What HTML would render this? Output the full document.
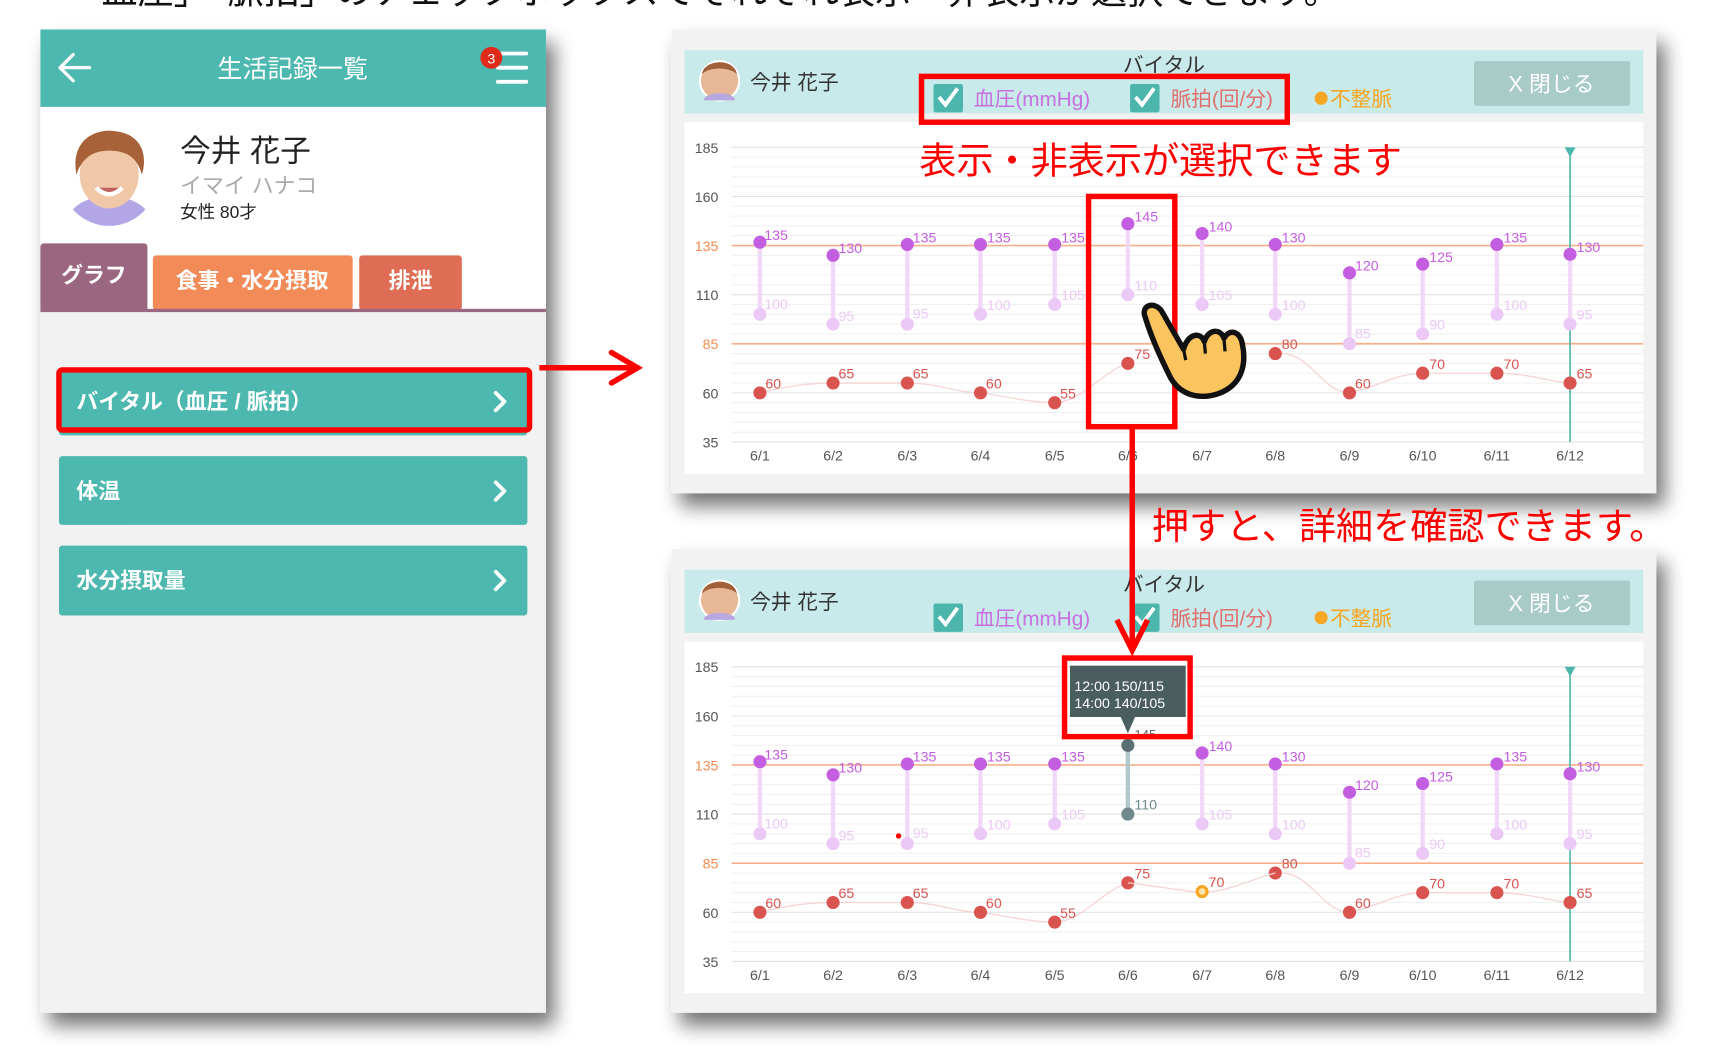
<!DOCTYPE html>
<html><head><meta charset="utf-8"><style>
html,body{margin:0;padding:0;background:#fff;width:1712px;height:1064px;overflow:hidden}
svg{display:block}
text{font-family:"Liberation Sans","Noto Sans CJK JP",sans-serif}
</style></head><body>
<svg width="1712" height="1064" viewBox="0 0 1568 975" preserveAspectRatio="none" xmlns="http://www.w3.org/2000/svg">
<defs>
<filter id="sh" x="-10%" y="-10%" width="125%" height="125%">
<feGaussianBlur in="SourceAlpha" stdDeviation="9"/>
<feOffset dx="8" dy="12"/>
<feComponentTransfer><feFuncA type="linear" slope="0.55"/></feComponentTransfer>
<feMerge><feMergeNode/><feMergeNode in="SourceGraphic"/></feMerge>
</filter>
<g id="hdr">
<rect x="627" y="46" width="878" height="58" fill="#c9eaea"/>
<circle cx="659" cy="74" r="19" fill="#fff"/>
<circle cx="659" cy="74" r="17" fill="#e8b896"/>
<path d="M643,68 C644,55 672,52 675,68 C670,62 650,60 643,68Z" fill="#a0603a"/>
<path d="M645,90 C650,84 668,84 673,90 L673,92 L645,92Z" fill="#b8a8e0"/>
<text x="687" y="82" font-size="19" fill="#333">今井 花子</text>
<text x="1066" y="66" font-size="19" fill="#333" text-anchor="middle">バイタル</text>
<rect x="855" y="77" width="27" height="26" rx="2" fill="#4db6ac"/>
<path d="M860,89 L866,96 L877,81" stroke="#fff" stroke-width="3.5" fill="none"/>
<text x="892" y="97" font-size="19" fill="#c76ee0">血圧(mmHg)</text>
<rect x="1035" y="77" width="27" height="26" rx="2" fill="#4db6ac"/>
<path d="M1040,89 L1046,96 L1057,81" stroke="#fff" stroke-width="3.5" fill="none"/>
<text x="1072" y="97" font-size="19" fill="#e07070">脈拍(回/分)</text>
<circle cx="1210" cy="90" r="6" fill="#f5a623"/>
<text x="1218" y="97" font-size="19" fill="#f5a623">不整脈</text>
<rect x="1350" y="56" width="143" height="41" rx="2" fill="#a8cbc8"/>
<text x="1421" y="84" font-size="20" fill="#fff" text-anchor="middle">X 閉じる</text>
<rect x="627" y="112" width="878" height="322" fill="#fff"/>
<g stroke="#f0f0f0" stroke-width="1">
<line x1="670" y1="144" x2="1505" y2="144"/><line x1="670" y1="153" x2="1505" y2="153"/><line x1="670" y1="162" x2="1505" y2="162"/><line x1="670" y1="171" x2="1505" y2="171"/>
<line x1="670" y1="189" x2="1505" y2="189"/><line x1="670" y1="198" x2="1505" y2="198"/><line x1="670" y1="207" x2="1505" y2="207"/><line x1="670" y1="216" x2="1505" y2="216"/>
<line x1="670" y1="234" x2="1505" y2="234"/><line x1="670" y1="243" x2="1505" y2="243"/><line x1="670" y1="252" x2="1505" y2="252"/><line x1="670" y1="261" x2="1505" y2="261"/>
<line x1="670" y1="279" x2="1505" y2="279"/><line x1="670" y1="288" x2="1505" y2="288"/><line x1="670" y1="297" x2="1505" y2="297"/><line x1="670" y1="306" x2="1505" y2="306"/>
<line x1="670" y1="324" x2="1505" y2="324"/><line x1="670" y1="333" x2="1505" y2="333"/><line x1="670" y1="342" x2="1505" y2="342"/><line x1="670" y1="351" x2="1505" y2="351"/>
<line x1="670" y1="369" x2="1505" y2="369"/><line x1="670" y1="378" x2="1505" y2="378"/><line x1="670" y1="387" x2="1505" y2="387"/><line x1="670" y1="396" x2="1505" y2="396"/>
</g>
<g stroke="#e2e2e2" stroke-width="1">
<line x1="670" y1="135" x2="1505" y2="135"/><line x1="670" y1="180" x2="1505" y2="180"/><line x1="670" y1="270" x2="1505" y2="270"/><line x1="670" y1="360" x2="1505" y2="360"/><line x1="670" y1="405" x2="1505" y2="405"/>
</g>
<line x1="670" y1="225" x2="1505" y2="225" stroke="#f7b08a" stroke-width="1.5"/>
<line x1="670" y1="315" x2="1505" y2="315" stroke="#f7b08a" stroke-width="1.5"/>
<g font-size="13" fill="#555" text-anchor="end">
<text x="658" y="140">185</text><text x="658" y="185">160</text><text x="658" y="230" fill="#f58a50">135</text><text x="658" y="275">110</text><text x="658" y="320" fill="#f58a50">85</text><text x="658" y="365">60</text><text x="658" y="410">35</text>
</g>
<g font-size="13" fill="#555" text-anchor="middle">
<text x="696" y="422">6/1</text><text x="763" y="422">6/2</text><text x="831" y="422">6/3</text><text x="898" y="422">6/4</text><text x="966" y="422">6/5</text><text x="1033" y="422">6/6</text><text x="1101" y="422">6/7</text><text x="1168" y="422">6/8</text><text x="1236" y="422">6/9</text><text x="1303" y="422">6/10</text><text x="1371" y="422">6/11</text><text x="1438" y="422">6/12</text>
</g>
<line x1="1438" y1="140" x2="1438" y2="405" stroke="#4db6ac" stroke-width="1.5"/>
<path d="M1433,135 L1443,135 L1438,144Z" fill="#4db6ac"/>
</g>
<g id="bp">
<g stroke="#f2d8f8" stroke-width="4">
<line x1="696" y1="225" x2="696" y2="288"/><line x1="763" y1="234" x2="763" y2="297"/><line x1="831" y1="225" x2="831" y2="297"/><line x1="898" y1="225" x2="898" y2="288"/><line x1="966" y1="225" x2="966" y2="279"/>
<line x1="1101" y1="216" x2="1101" y2="279"/><line x1="1168" y1="225" x2="1168" y2="288"/><line x1="1236" y1="252" x2="1236" y2="315"/><line x1="1303" y1="243" x2="1303" y2="306"/><line x1="1371" y1="225" x2="1371" y2="288"/><line x1="1438" y1="234" x2="1438" y2="297"/>
</g>
<g fill="#ecc8f6">
<circle cx="696" cy="288" r="6"/><circle cx="763" cy="297" r="6"/><circle cx="831" cy="297" r="6"/><circle cx="898" cy="288" r="6"/><circle cx="966" cy="279" r="6"/><circle cx="1101" cy="279" r="6"/><circle cx="1168" cy="288" r="6"/><circle cx="1236" cy="315" r="6"/><circle cx="1303" cy="306" r="6"/><circle cx="1371" cy="288" r="6"/><circle cx="1438" cy="297" r="6"/>
</g>
<g fill="#c45ee0">
<circle cx="696" cy="222" r="6"/><circle cx="763" cy="234" r="6"/><circle cx="831" cy="224" r="6"/><circle cx="898" cy="224" r="6"/><circle cx="966" cy="224" r="6"/><circle cx="1101" cy="214" r="6"/><circle cx="1168" cy="224" r="6"/><circle cx="1236" cy="250" r="6"/><circle cx="1303" cy="242" r="6"/><circle cx="1371" cy="224" r="6"/><circle cx="1438" cy="233" r="6"/>
</g>
<g font-size="13" fill="#c45ee0">
<text x="700" y="220">135</text><text x="768" y="232">130</text><text x="836" y="222">135</text><text x="904" y="222">135</text><text x="972" y="222">135</text><text x="1107" y="212">140</text><text x="1174" y="222">130</text><text x="1241" y="248">120</text><text x="1309" y="240">125</text><text x="1377" y="222">135</text><text x="1444" y="231">130</text>
</g>
<g font-size="13" fill="#ecc8f6">
<text x="700" y="283">100</text><text x="768" y="294">95</text><text x="836" y="292">95</text><text x="904" y="284">100</text><text x="972" y="275">105</text><text x="1107" y="275">105</text><text x="1174" y="284">100</text><text x="1241" y="310">85</text><text x="1309" y="302">90</text><text x="1377" y="284">100</text><text x="1444" y="293">95</text>
</g>
<path d="M696,360 C720,354 740,351 763,351 L831,351 C860,351 875,360 898,360 C925,364 945,369 966,369 C990,369 1010,340 1033,333" stroke="#f6d4d4" stroke-width="1.2" fill="none"/>
<path d="M1168,324 C1200,320 1210,360 1236,360 C1260,355 1280,342 1303,342 L1371,342 C1400,342 1420,350 1438,351" stroke="#f6d4d4" stroke-width="1.2" fill="none"/>
<g fill="#d9534f">
<circle cx="696" cy="360" r="6"/><circle cx="763" cy="351" r="6"/><circle cx="831" cy="351" r="6"/><circle cx="898" cy="360" r="6"/><circle cx="966" cy="369" r="6"/><circle cx="1033" cy="333" r="6"/><circle cx="1168" cy="324" r="6"/><circle cx="1236" cy="360" r="6"/><circle cx="1303" cy="342" r="6"/><circle cx="1371" cy="342" r="6"/><circle cx="1438" cy="351" r="6"/>
</g>
<g font-size="13" fill="#d9534f">
<text x="701" y="356">60</text><text x="768" y="347">65</text><text x="836" y="347">65</text><text x="903" y="356">60</text><text x="971" y="365">55</text><text x="1039" y="329">75</text><text x="1174" y="320">80</text><text x="1241" y="356">60</text><text x="1309" y="338">70</text><text x="1377" y="338">70</text><text x="1444" y="347">65</text>
</g>
</g>
</defs>

<text x="60" y="3" font-size="33" fill="#111">「血圧」「脈拍」のチェックボックスでそれぞれ表示・非表示が選択できます。</text>

<!-- left phone -->
<g filter="url(#sh)">
<rect x="37" y="27" width="463" height="901" fill="#f2f2f2"/>
</g>
<rect x="37" y="27" width="463" height="71" fill="#4db8b0"/>
<path d="M56,62 L82,62 M67,50 L55,62 L67,74" stroke="#fff" stroke-width="3" fill="none" stroke-linecap="round" stroke-linejoin="round"/>
<text x="268" y="71" font-size="23" fill="#fff" text-anchor="middle">生活記録一覧</text>
<g stroke="#fff" stroke-width="3.5" stroke-linecap="round"><line x1="456" y1="49" x2="482" y2="49"/><line x1="456" y1="62" x2="482" y2="62"/><line x1="456" y1="75" x2="482" y2="75"/></g>
<circle cx="450" cy="53" r="10" fill="#e02a1a"/>
<text x="450" y="58" font-size="13" fill="#fff" text-anchor="middle">3</text>
<rect x="37" y="98" width="463" height="185" fill="#fff"/>
<circle cx="100" cy="163" r="45" fill="#fff"/>
<clipPath id="av"><circle cx="100" cy="163" r="44"/></clipPath>
<g clip-path="url(#av)">
<rect x="56" y="119" width="88" height="88" fill="#fff"/>
<path d="M58,210 C62,188 80,180 100,180 C120,180 138,188 142,210Z" fill="#b3a6e6"/>
<ellipse cx="100" cy="160" rx="27" ry="31" fill="#f0c8a8"/>
<path d="M70,160 C64,128 88,118 104,120 C128,122 136,140 130,160 C126,146 118,138 100,138 C82,138 74,148 70,160Z" fill="#a8623a"/>
<path d="M88,172 Q100,184 112,172" stroke="#fff" stroke-width="4" fill="#c06060"/>
</g>
<text x="165" y="148" font-size="28" fill="#222">今井 花子</text>
<text x="165" y="177" font-size="20" fill="#aaa">イマイ ハナコ</text>
<text x="165" y="200" font-size="16" fill="#222">女性 80才</text>
<rect x="37" y="223" width="98" height="62" rx="3" fill="#9b6680"/>
<text x="86" y="259" font-size="20" font-weight="bold" fill="#fff" text-anchor="middle">グラフ</text>
<rect x="140" y="234" width="183" height="50" rx="3" fill="#f28b57"/>
<text x="231" y="264" font-size="20" font-weight="bold" fill="#fff" text-anchor="middle">食事・水分摂取</text>
<rect x="329" y="234" width="94" height="50" rx="3" fill="#df6d55"/>
<text x="376" y="264" font-size="20" font-weight="bold" fill="#fff" text-anchor="middle">排泄</text>
<rect x="37" y="283" width="463" height="3" fill="#9b6680"/>

<rect x="54" y="340" width="429" height="59" rx="3" fill="#4db8b0"/>
<rect x="54" y="418" width="429" height="63" rx="3" fill="#4db8b0"/>
<rect x="54" y="500" width="429" height="64" rx="3" fill="#4db8b0"/>
<g font-size="20" font-weight="bold" fill="#fff">
<text x="70" y="375">バイタル（血圧 / 脈拍）</text>
<text x="70" y="457">体温</text>
<text x="70" y="539">水分摂取量</text>
</g>
<g stroke="#fff" stroke-width="3.5" fill="none" stroke-linecap="round" stroke-linejoin="round">
<path d="M454,360 L462,368 L454,376"/><path d="M454,442 L462,450 L454,458"/><path d="M454,524 L462,532 L454,540"/>
</g>
<rect x="54" y="339" width="431" height="55" rx="3" fill="none" stroke="#f00" stroke-width="5"/>
<path d="M494,337 L582,337" stroke="#f00" stroke-width="5"/>
<path d="M560,323 L584,337 L560,351" stroke="#f00" stroke-width="5" fill="none" stroke-linecap="round"/>

<!-- right panels -->
<g filter="url(#sh)"><rect x="615" y="27" width="902" height="425" fill="#f2f2f2"/></g>
<g filter="url(#sh)"><rect x="615" y="503" width="902" height="425" fill="#f2f2f2"/></g>

<use href="#hdr"/>
<use href="#bp"/>
<line x1="1033" y1="207" x2="1033" y2="270" stroke="#f2d8f8" stroke-width="4"/>
<circle cx="1033" cy="270" r="6" fill="#ecc8f6"/><circle cx="1033" cy="205" r="6" fill="#c45ee0"/>
<text x="1039" y="203" font-size="13" fill="#c45ee0">145</text>
<text x="1039" y="266" font-size="13" fill="#ecc8f6">110</text>

<text x="842" y="159" font-size="34" fill="#f00">表示・非表示が選択できます</text>
<rect x="844" y="70" width="335" height="42" fill="none" stroke="#f00" stroke-width="5"/>
<rect x="997" y="180" width="79" height="211" fill="none" stroke="#f00" stroke-width="5"/>

<path d="M1049,291 C1044,279 1059,275 1065,287 L1084,320 C1088,305 1100,304 1103,313 C1107,301 1118,301 1121,310 C1126,301 1136,303 1138,316 C1142,336 1136,354 1115,361 C1095,367 1080,360 1072,346 C1065,332 1055,311 1049,291 Z" fill="#fcc45e" stroke="#111" stroke-width="5" stroke-linejoin="round"/>
<path d="M1084,320 L1086,330 M1103,313 L1104,324 M1121,310 L1122,322" stroke="#111" stroke-width="3" fill="none"/>

<text x="1055" y="494" font-size="34" fill="#f00">押すと、詳細を確認できます。</text>

<g transform="translate(0,476)">
<use href="#hdr"/>
<use href="#bp"/>
<line x1="1033" y1="207" x2="1033" y2="270" stroke="#b0c8cc" stroke-width="4"/>
<circle cx="1033" cy="270" r="6" fill="#6e8a8c"/><circle cx="1033" cy="207" r="6" fill="#5a7072"/>
<text x="1039" y="266" font-size="13" fill="#6e8a8c">110</text>
<path d="M1033,333 C1060,336 1080,340 1101,342 C1130,340 1150,328 1168,324" stroke="#f6d4d4" stroke-width="1.2" fill="none"/>
<circle cx="1101" cy="341" r="6" fill="#f5a623"/><circle cx="1101" cy="341" r="3" fill="#fde4b0"/>
<text x="1107" y="337" font-size="13" fill="#d9534f">70</text>
<circle cx="823" cy="290" r="2.5" fill="#f00"/>
</g>
<rect x="980" y="610" width="106" height="47" fill="#4a5e60"/>
<path d="M1026,656 L1040,656 L1033,672Z" fill="#4a5e60"/>
<text x="984" y="633" font-size="13" fill="#fff">12:00 150/115</text>
<text x="984" y="649" font-size="13" fill="#fff">14:00 140/105</text>
<text x="1039" y="677" font-size="12" fill="#666">145</text>
<rect x="975" y="603" width="115" height="72" fill="none" stroke="#f00" stroke-width="5"/>

<path d="M1037,392 L1037,594" stroke="#f00" stroke-width="5"/>
<path d="M1023,568 L1037,596 L1051,568" stroke="#f00" stroke-width="5" fill="none"/>
</svg>
</body></html>
